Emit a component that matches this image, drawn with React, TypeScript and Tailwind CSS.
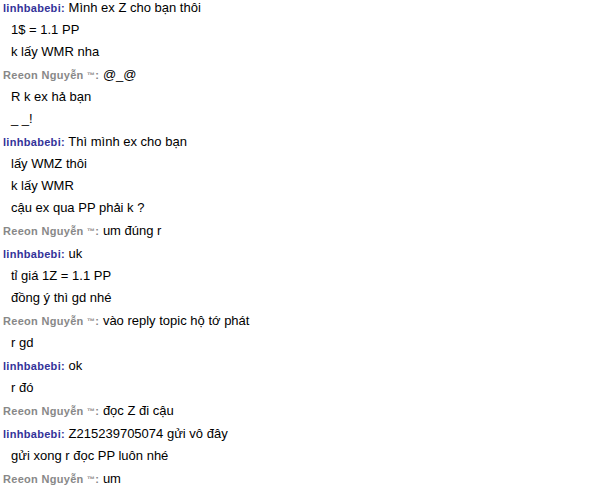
import React from "react";

type Msg = { who: "L" | "R"; lines: string[] };

const msgs: Msg[] = [
  { who: "L", lines: ["Mình ex Z cho bạn thôi", "1$ = 1.1 PP", "k lấy WMR nha"] },
  { who: "R", lines: ["@_@", "R k ex hả bạn", "_ _!"] },
  { who: "L", lines: ["Thì mình ex cho bạn", "lấy WMZ thôi", "k lấy WMR", "cậu ex qua PP phải k ?"] },
  { who: "R", lines: ["um đúng r"] },
  { who: "L", lines: ["uk", "tỉ giá 1Z = 1.1 PP", "đồng ý thì gd nhé"] },
  { who: "R", lines: ["vào reply topic hộ tớ phát", "r gd"] },
  { who: "L", lines: ["ok", "r đó"] },
  { who: "R", lines: ["đọc Z đi cậu"] },
  { who: "L", lines: ["Z215239705074 gửi vô đây", "gửi xong r đọc PP luôn nhé"] },
  { who: "R", lines: ["um"] },
];

function Name({ who }: { who: "L" | "R" }) {
  if (who === "L") {
    return <span className="font-bold text-[11px] tracking-[0.3px] text-[#333399]">linhbabebi:</span>;
  }
  return (
    <span className="font-bold text-[11px] tracking-[0.3px] text-[#888888]">
      Reeon Nguyễn <span className="text-[8px] align-[1px]">™</span>:
    </span>
  );
}

export default function App() {
  return (
    <div
      className="w-[595px] h-[493px] bg-white overflow-hidden text-[13px] text-black"
      style={{ fontFamily: '"Liberation Sans", Arial, sans-serif' }}
    >
      {msgs.map((m, i) => (
        <div key={i} className={i === 0 ? "" : "pt-[1px]"}>
          {m.lines.map((line, j) =>
            j === 0 ? (
              <div key={j} className="h-[22px] leading-[16px] pl-[3px] whitespace-pre">
                <Name who={m.who} /> {line}
              </div>
            ) : (
              <div key={j} className="h-[22px] leading-[16px] pl-[11px] whitespace-pre">
                {line}
              </div>
            )
          )}
        </div>
      ))}
    </div>
  );
}
